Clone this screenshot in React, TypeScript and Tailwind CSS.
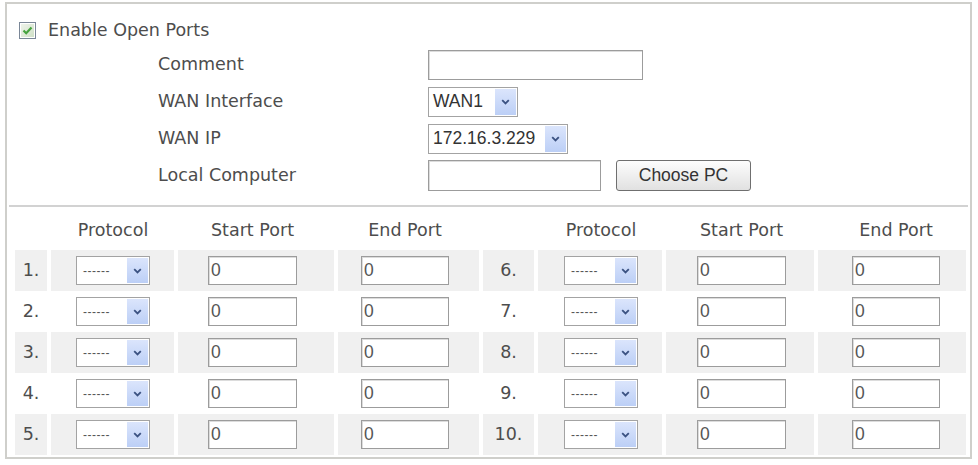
const label = "font-['DejaVu_Sans',Verdana,sans-serif] text-[17.5px] text-[#4d4d4d]"
const ctrl = "font-['Liberation_Sans',Arial,sans-serif] text-[17.5px] text-[#333]"

const grid =
  'grid grid-cols-[32px_123px_156px_141px_51px_124px_148px_148px] gap-x-[4px]'

function Arrow() {
  return (
    <span className="flex w-[21px] items-center justify-center bg-gradient-to-b from-[#dbe5fc] to-[#bccff6]">
      <svg width="9" height="6" viewBox="0 0 9 6">
        <path d="M1.2 1.2 L4.5 4.5 L7.8 1.2" fill="none" stroke="#3b5282" strokeWidth="1.8" />
      </svg>
    </span>
  )
}

function Select({ value, className }: { value: string; className: string }) {
  return (
    <div className={`flex items-stretch border border-[#a3a3a3] bg-white p-px ${className}`}>
      <span className={`flex flex-1 items-center pl-[3px] ${ctrl}`}>{value}</span>
      <Arrow />
    </div>
  )
}

function DashSelect() {
  return (
    <div className="flex h-[29px] w-[74px] items-stretch border border-[#a3a3a3] bg-white p-px">
      <span className="flex flex-1 items-center pl-[5px] font-['Liberation_Sans',Arial,sans-serif] text-[12px] tracking-[0.5px] text-[#555]">
        ------
      </span>
      <Arrow />
    </div>
  )
}

function TextBox({ className, value }: { className: string; value?: string }) {
  return (
    <input
      readOnly
      value={value ?? ''}
      className={`border border-[#9c9c9c] bg-white pl-[2px] shadow-[inset_1px_1px_0_#dcdcdc] outline-none ${ctrl} text-[#555] ${className}`}
    />
  )
}

function Checkbox() {
  return (
    <svg width="17" height="17" viewBox="0 0 17 17">
      <defs>
        <linearGradient id="cb" x1="0" y1="0" x2="1" y2="1">
          <stop offset="0" stopColor="#eef3ea" />
          <stop offset="1" stopColor="#cfe0c6" />
        </linearGradient>
      </defs>
      <rect x="0.5" y="0.5" width="16" height="16" fill="#fff" stroke="#7a8797" />
      <rect x="2" y="2" width="13" height="13" fill="url(#cb)" />
      <path d="M4.5 8.5 L7.2 11.2 L12.5 5.5" fill="none" stroke="#46a33f" strokeWidth="2.2" />
    </svg>
  )
}

const formRows = ['Comment', 'WAN Interface', 'WAN IP', 'Local Computer']

function FormControl({ index }: { index: number }) {
  if (index === 0) return <TextBox className="h-[30px] w-[215px]" />
  if (index === 1) return <Select value="WAN1" className="h-[30px] w-[90px]" />
  if (index === 2) return <Select value="172.16.3.229" className="h-[30px] w-[140px]" />
  return (
    <div className="flex items-center gap-[15px]">
      <TextBox className="h-[31px] w-[173px]" />
      <button
        className={`h-[31px] w-[135px] rounded-[3px] border border-[#6f6f6f] bg-gradient-to-b from-[#fdfdfd] to-[#e1e1e1] ${ctrl}`}
      >
        Choose PC
      </button>
    </div>
  )
}

function Head({ text, pl, w }: { text: string; pl: string; w: string }) {
  return (
    <div className={pl}>
      <div className={`flex justify-center whitespace-nowrap ${w} ${label}`}>{text}</div>
    </div>
  )
}

function PortRow({ n, shaded }: { n: number; shaded: boolean }) {
  const cell = `flex h-[41px] items-center ${shaded ? 'bg-[#f0f0f0]' : ''}`
  return (
    <div className={grid}>
      <div className={`${cell} justify-center ${label}`}>{n}.</div>
      <div className={`${cell} pl-[25px]`}>
        <DashSelect />
      </div>
      <div className={`${cell} pl-[30px]`}>
        <TextBox value="0" className="h-[29px] w-[89px]" />
      </div>
      <div className={`${cell} pl-[23px]`}>
        <TextBox value="0" className="h-[29px] w-[88px]" />
      </div>
      <div className={`${cell} justify-center ${label}`}>{n + 5}.</div>
      <div className={`${cell} pl-[26px]`}>
        <DashSelect />
      </div>
      <div className={`${cell} pl-[31px]`}>
        <TextBox value="0" className="h-[29px] w-[89px]" />
      </div>
      <div className={`${cell} pl-[34px]`}>
        <TextBox value="0" className="h-[29px] w-[88px]" />
      </div>
    </div>
  )
}

export default function App() {
  return (
    <div className="h-[465px] w-[978px] bg-white pl-[5px] pt-[2px]">
      <div className="h-[457px] w-[967px] border-2 border-[#cfcfcb] pt-[10px]">
        <div className="flex h-[32px] items-center gap-[12px] pl-[12px]">
          <Checkbox />
          <span className={label}>Enable Open Ports</span>
        </div>

        {formRows.map((text, i) => (
          <div key={text} className="flex h-[37px] items-center pl-[151px]">
            <span className={`w-[270px] ${label}`}>{text}</span>
            <FormControl index={i} />
          </div>
        ))}

        <div className="mx-[2px] mt-[11px] h-[2px] bg-[#d2d2d2]" />

        <div className="pl-[8px]">
          <div className={`${grid} h-[43px] items-end pb-[7px]`}>
            <div />
            <Head text="Protocol" pl="pl-[25px]" w="w-[74px]" />
            <Head text="Start Port" pl="pl-[30px]" w="w-[89px]" />
            <Head text="End Port" pl="pl-[23px]" w="w-[88px]" />
            <div />
            <Head text="Protocol" pl="pl-[26px]" w="w-[74px]" />
            <Head text="Start Port" pl="pl-[31px]" w="w-[89px]" />
            <Head text="End Port" pl="pl-[34px]" w="w-[88px]" />
          </div>
          {[1, 2, 3, 4, 5].map((n) => (
            <PortRow key={n} n={n} shaded={n % 2 === 1} />
          ))}
        </div>
      </div>
    </div>
  )
}
